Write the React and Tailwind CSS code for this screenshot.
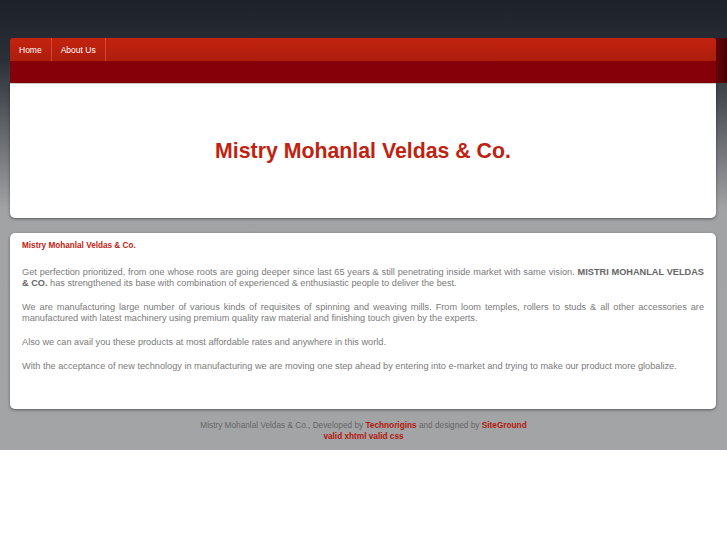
export default function App() {
  return (
    <div className="min-h-[545px] bg-white font-['Liberation_Sans',Arial,sans-serif]">
      <div className="h-[450px] bg-[linear-gradient(to_bottom,#1d212a_0px,#2b2f37_60px,#5a5d62_120px,#a2a3a5_210px,#a3a4a6_450px)] pt-[38px]">
        {/* nav */}
        <div className="flex">
          <div className="ml-[10px] w-[706px] rounded-t-[3px] overflow-hidden">
            <div className="h-[23px] flex bg-[linear-gradient(to_bottom,#c3230f,#ad1d0c)]">
              <a className="px-[9px] text-[8.5px] leading-[24px] text-white border-r border-[#d8452f]">Home</a>
              <a className="px-[9px] text-[8.5px] leading-[24px] text-white border-r border-[#d8452f]">About Us</a>
            </div>
            <div className="h-[22px] bg-[#850008]"></div>
          </div>
          <div className="flex-1 h-[45px] border-l border-[#3a0000] bg-[linear-gradient(to_right,#6e0005,#3e0003)]"></div>
        </div>
        {/* header */}
        <div className="ml-[10px] w-[706px] h-[135px] pt-[2px] bg-white border-t border-[#c9c9c9] rounded-b-[5px] shadow-[0_1px_3px_rgba(0,0,0,0.45)] flex items-center justify-center">
          <h1 className="text-[21.3px] font-bold text-[#c0220f] leading-none">Mistry Mohanlal Veldas &amp; Co.</h1>
        </div>
        {/* content */}
        <div className="ml-[10px] mt-[15px] w-[706px] h-[176px] bg-white rounded-[5px] shadow-[0_1px_3px_rgba(0,0,0,0.45)] px-[12px] pt-[7px] text-[9.2px] leading-[11px] text-[#7a7a7a] text-justify">
          <h2 className="text-[8.2px] font-bold text-[#c0220f] leading-[11px]">Mistry Mohanlal Veldas &amp; Co.</h2>
          <p className="mt-[16px]">
            Get perfection prioritized, from one whose roots are going deeper since last 65 years &amp; still penetrating inside market with same vision. <b className="text-[#666]">MISTRI MOHANLAL VELDAS &amp; CO.</b> has strengthened its base with combination of experienced &amp; enthusiastic people to deliver the best.
          </p>
          <p className="mt-[13px]">
            We are manufacturing large number of various kinds of requisites of spinning and weaving mills. From loom temples, rollers to studs &amp; all other accessories are manufactured with latest machinery using premium quality raw material and finishing touch given by the experts.
          </p>
          <p className="mt-[13px]">Also we can avail you these products at most affordable rates and anywhere in this world.</p>
          <p className="mt-[13px]">With the acceptance of new technology in manufacturing we are moving one step ahead by entering into e-market and trying to make our product more globalize.</p>
        </div>
        {/* footer */}
        <div className="pt-[11px] text-center text-[8.25px] leading-[11px] text-[#666]">
          <p>
            Mistry Mohanlal Veldas &amp; Co., Developed by <b className="text-[#b2170c]">Technorigins</b> and designed by <b className="text-[#b2170c]">SiteGround</b>
          </p>
          <p className="font-bold text-[#b2170c]">valid xhtml valid css</p>
        </div>
      </div>
    </div>
  );
}
